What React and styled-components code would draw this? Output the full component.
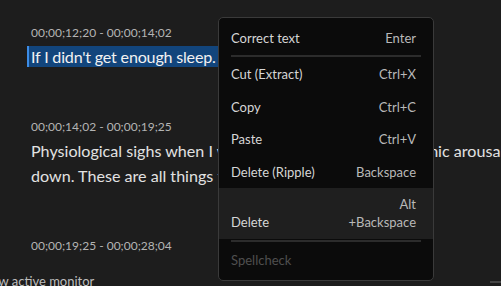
import React from 'react';
import styled, { createGlobalStyle } from 'styled-components';

const GlobalStyle = createGlobalStyle`
  html, body {
    margin: 0;
    padding: 0;
    background: #1d1d1d;
    overflow: hidden;
  }
  body {
    width: 501px;
    height: 286px;
    font-family: Lato, "Open Sans", sans-serif;
  }
`;

const Page = styled.div`
  position: relative;
  width: 501px;
  height: 286px;
  overflow: hidden;
  background: #1d1d1d;
  display: flex;
  flex-direction: column;
`;

const Transcript = styled.div`
  height: 270px;
  padding: 25px 0 0 31px;
  box-sizing: border-box;
  display: flex;
  flex-direction: column;
  gap: 50px;
  overflow: hidden;
`;

const Segment = styled.div`
  display: flex;
  flex-direction: column;
  gap: 3px;
`;

const Timecode = styled.div`
  font-size: 12px;
  line-height: 16px;
  color: #b4b4b4;
  white-space: nowrap;
`;

const Caption = styled.div`
  width: 490px;
  font-size: 16.1px;
  line-height: 25px;
  color: #e2e2e2;
`;

const Selected = styled.span`
  margin-left: -4px;
  padding: 1px 2px 1px 2px;
  border-left: 2px solid #3c8ce6;
  background: #12457c;
  color: #f2f2f2;
  letter-spacing: -0.2px;
`;

const Footer = styled.div`
  flex: 1;
  display: flex;
  align-items: flex-end;
  justify-content: space-between;
  margin-bottom: -3px;
`;

const Status = styled.div`
  margin-left: -23px;
  font-size: 13px;
  line-height: 16px;
  color: #bdbdbd;
  white-space: nowrap;
`;

const Thumb = styled.div`
  width: 11px;
  height: 2px;
  margin-bottom: 6px;
  background: #454545;
`;

const Menu = styled.div`
  position: absolute;
  left: 218px;
  top: 17px;
  width: 216px;
  box-sizing: border-box;
  padding: 4px 0 3px;
  background: #0b0b0b;
  border: 1px solid #3a3a3a;
  border-radius: 5px;
  display: flex;
  flex-direction: column;
`;

const Item = styled.div`
  height: ${p => (p.$tall ? '51px' : p.$h || '32.5px')};
  box-sizing: border-box;
  padding: ${p => (p.$tall ? '8px 17px 8px 12px' : '0 17px 0 12px')};
  display: flex;
  align-items: ${p => (p.$tall ? 'flex-end' : 'center')};
  justify-content: space-between;
  background: ${p => (p.$hover ? '#1f1f1f' : 'transparent')};
  font-size: 13px;
  line-height: 18px;
  color: ${p => (p.$disabled ? '#4f4f4f' : '#d6d6d6')};
`;

const Shortcut = styled.span`
  color: #b9b9b9;
  text-align: right;
  white-space: pre-line;
`;

const Separator = styled.div`
  height: 2px;
  margin: 1px 12px;
  background: #2c2c2c;
`;

const items = [
  { label: 'Cut (Extract)', key: 'Ctrl+X' },
  { label: 'Copy', key: 'Ctrl+C' },
  { label: 'Paste', key: 'Ctrl+V' },
  { label: 'Delete (Ripple)', key: 'Backspace' },
];

export default function App() {
  return (
    <Page>
      <GlobalStyle />
      <Transcript>
        <Segment>
          <Timecode>00;00;12;20 - 00;00;14;02</Timecode>
          <Caption>
            <Selected>If I didn't get enough sleep.</Selected>
          </Caption>
        </Segment>
        <Segment>
          <Timecode>00;00;14;02 - 00;00;19;25</Timecode>
          <Caption>
            Physiological sighs when I want to bring my own autonomic arousal
            down. These are all things to help calm down.
          </Caption>
        </Segment>
        <Segment>
          <Timecode>00;00;19;25 - 00;00;28;04</Timecode>
        </Segment>
      </Transcript>
      <Footer>
        <Status>Show active monitor</Status>
        <Thumb />
      </Footer>

      <Menu>
        <Item $h="32px">
          <span>Correct text</span>
          <Shortcut>Enter</Shortcut>
        </Item>
        <Separator />
        {items.map(it => (
          <Item key={it.label}>
            <span>{it.label}</span>
            <Shortcut>{it.key}</Shortcut>
          </Item>
        ))}
        <Item $tall $hover>
          <span>Delete</span>
          <Shortcut>{'Alt\n+Backspace'}</Shortcut>
        </Item>
        <Separator />
        <Item $h="34px" $disabled>
          <span>Spellcheck</span>
        </Item>
      </Menu>
    </Page>
  );
}
